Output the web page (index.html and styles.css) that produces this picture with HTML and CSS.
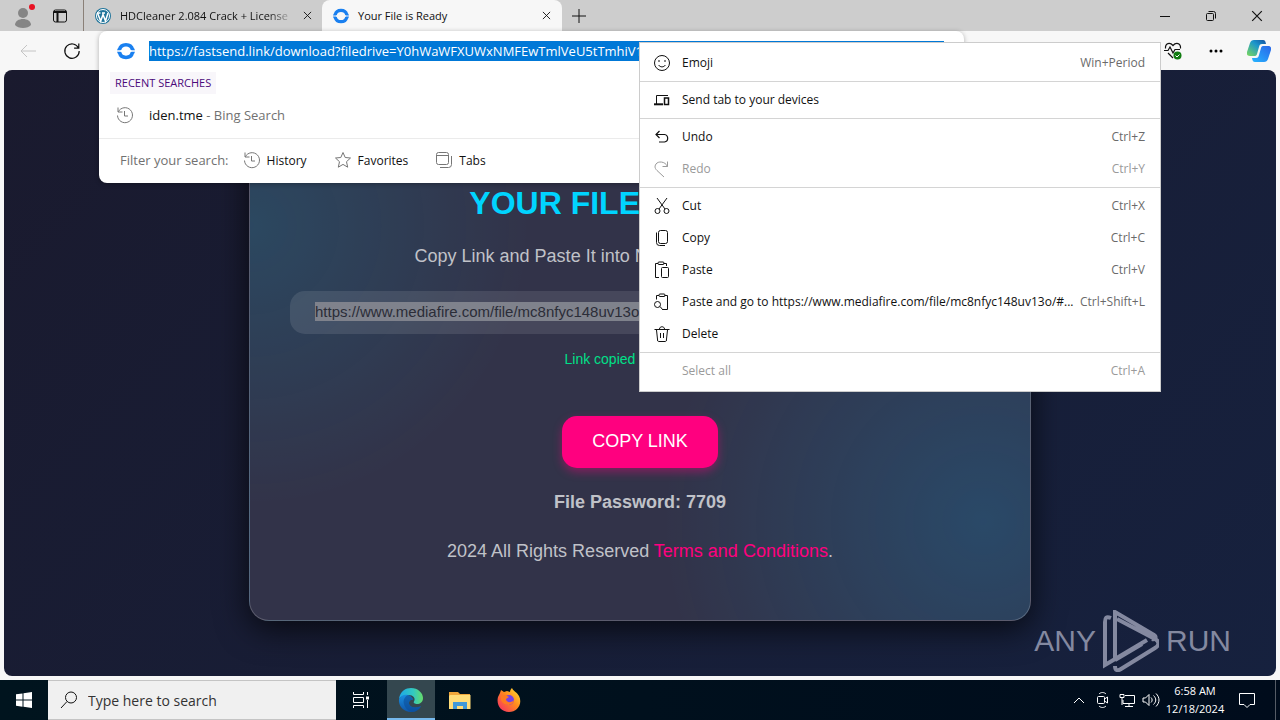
FILE: index.html
```html
<!DOCTYPE html>
<html lang="en">
<head>
  <meta charset="UTF-8" />
  <meta name="viewport" content="width=device-width, initial-scale=1.0" />
  <title>Your File is Ready</title>
  <link rel="stylesheet" href="styles.css">
</head>
<body>
  <svg width="0" height="0" class="defs">
    <defs>
      <symbol id="close" viewBox="0 0 10 10"><path d="M1 1l8 8M9 1l-8 8" /></symbol>
      <symbol id="history" viewBox="0 0 18 18"><path d="M2 1.500v4.500h4.500M2.300 5.800A7.500 7.500 0 1 1 1.500 9.500M8.500 5v5h3.500" /></symbol>
      <symbol id="ring" viewBox="0 0 18 18">
        <path d="M2.500 7.500C4 1 14 1 15.500 7.500M2.500 10.500C4 17 14 17 15.500 10.500" fill="none" stroke="#1a80f0" stroke-width="3.500" />
        <path d="M.8 6.500l4 0L3.500 8.300H0zM17.200 6.500h-4l1.300 1.800H18zM.8 11.500h4L3.500 9.700H0zM17.200 11.500h-4l1.300-1.800H18z" fill="#1a80f0" />
      </symbol>
    </defs>
  </svg>

  <header class="tabstrip">
    <button class="profile" aria-label="Profile">
      <svg width="22" height="26" viewBox="0 0 22 26"><circle cx="10" cy="10" r="5" fill="#858585" /><path d="M2 22c0-8 16-8 16 0-3 4-13 4-16 0z" fill="#858585" /><circle cx="19" cy="4" r="3" fill="#e81123" /></svg>
    </button>
    <button class="workspace" aria-label="Tab actions">
      <svg class="line" width="16" height="16" viewBox="0 0 16 16"><rect x="1.500" y="2" width="13" height="12" rx="2" /><path d="M2 4h12M5.500 5v9" stroke-width="2" /></svg>
    </button>
    <div class="tab">
      <svg width="16" height="16" viewBox="0 0 16 16"><circle cx="8" cy="8" r="8" fill="#21759b" /><circle cx="8" cy="8" r="6.500" fill="none" stroke="#fff" /><path d="M2.500 5l3.200 8L8 6.500l2.500 6.500L13 5M2 5h3.500M7 5h3" fill="none" stroke="#fff" stroke-width="1.500" /></svg>
      <span class="title faded">HDCleaner 2.084 Crack + License</span>
      <button aria-label="Close tab"><svg class="line" width="9" height="9"><use href="#close" /></svg></button>
    </div>
    <div class="tab active">
      <svg width="16" height="16"><use href="#ring" /></svg>
      <span class="title">Your File is Ready</span>
      <button aria-label="Close tab"><svg class="line" width="9" height="9"><use href="#close" /></svg></button>
    </div>
    <button class="new-tab" aria-label="New tab"><svg class="line" width="14" height="14" viewBox="0 0 14 14"><path d="M7 0v14M0 7h14" /></svg></button>
    <div class="window-buttons">
      <button aria-label="Minimize"><svg class="line" width="12" height="12" viewBox="0 0 12 12"><path d="M1 6.500h10" /></svg></button>
      <button aria-label="Restore"><svg class="line" width="12" height="12" viewBox="0 0 12 12"><rect x="1.500" y="3.500" width="7" height="7" rx="1" /><path d="M3.500 1.500h5a2 2 0 0 1 2 2v5" /></svg></button>
      <button aria-label="Close"><svg class="line" width="12" height="12"><use href="#close" /></svg></button>
    </div>
  </header>

  <div class="toolbar">
    <div class="nav">
      <button disabled aria-label="Back"><svg class="line" width="16" height="14" viewBox="0 0 16 14"><path d="M7 1L1 7l6 6M1 7h15" /></svg></button>
      <button aria-label="Refresh"><svg class="line" width="18" height="18" viewBox="0 0 18 18"><path d="M15.500 6A7.200 7.200 0 1 0 16.200 9M15.800 1.500v4.700h-4.700" stroke-width="1.200" /></svg></button>
    </div>
    <div class="address">
      <div class="popup">
        <label class="url">
          <svg width="18" height="18"><use href="#ring" /></svg>
          <input type="text" aria-label="Address" value="https://fastsend.link/download?filedrive=Y0hWaWFXUWxNMFEwTmlVeU5tTmhiV1FsTTBReE5pVXlObVJs" />
        </label>
        <h2>RECENT SEARCHES</h2>
        <a class="result" href="#">
          <svg class="line" width="18" height="18"><use href="#history" /></svg>
          <span>iden.tme <small>- Bing Search</small></span>
        </a>
        <div class="filters">
          <span>Filter your search:</span>
          <button><svg class="line" width="18" height="18"><use href="#history" /></svg>History</button>
          <button><svg class="line" width="18" height="18" viewBox="0 0 18 18"><path d="M9 1.500l2.200 5 5.300.5-4 3.700 1.200 5.500L9 13.400l-4.700 2.800 1.200-5.500-4-3.700 5.300-.5z" /></svg>Favorites</button>
          <button><svg class="line" width="18" height="18" viewBox="0 0 18 18"><rect x="1.500" y="1.500" width="12" height="12" rx="2" /><path d="M1.500 4.500h12M16.500 5v8.500a3 3 0 0 1-3 3H5" /></svg>Tabs</button>
        </div>
      </div>
    </div>
    <div class="tools">
      <button aria-label="Browser essentials">
        <svg class="line" width="18" height="18" viewBox="0 0 18 18"><path d="M1.500 6.500C1 1 6 0 9 3.500 12 0 17 1 16.500 6.500M0 8.500h4l2-3.500 3 6 2-3.500h5M4 11l5 5" stroke-width="1.200" /><circle cx="13.500" cy="13.500" r="4" fill="#107c10" stroke="none" /><path d="M11.500 13.500l1.500 1.500 2.500-2.500" stroke="#fff" /></svg>
      </button>
      <button aria-label="Settings and more"><svg width="14" height="4" viewBox="0 0 14 4"><circle cx="2" cy="2" r="1.500" /><circle cx="7" cy="2" r="1.500" /><circle cx="12" cy="2" r="1.500" /></svg></button>
      <button aria-label="Copilot">
        <svg width="24" height="24" viewBox="0 0 24 24">
          <defs>
            <linearGradient id="cp1" x1="1" y1="0" x2="0" y2="1"><stop offset="0" stop-color="#1450a0" /><stop offset=".4" stop-color="#1c96cc" /><stop offset="1" stop-color="#7bd95a" /></linearGradient>
            <linearGradient id="cp2" x1="1" y1="0" x2="0" y2="1"><stop offset="0" stop-color="#2a66e8" /><stop offset="1" stop-color="#27b5ff" /></linearGradient>
          </defs>
          <path d="M7 1h9c2 0 2.500 1.500 3 4h-4c-2 0-2.500 1-3 3l-2 7c-.5 1.500-1 2-3 2H3c-3 0-3.500-2-3-4L3 4c.7-2 2-3 4-3z" fill="url(#cp1)" />
          <path d="M17 23H8c-2 0-2.500-1.500-3-4h4c2 0 2.500-1 3-3l2-7c.5-1.500 1-2 3-2h4c3 0 3.500 2 3 4l-3 9c-.7 2-2 3-4 3z" fill="url(#cp2)" />
        </svg>
      </button>
    </div>
  </div>

  <main class="page">
    <section class="card">
      <h1>YOUR FILE IS READY!</h1>
      <p class="hint">Copy Link and Paste It into New Tab to Download It Now</p>
      <input class="link" type="text" readonly aria-label="Download link" value="https://www.mediafire.com/file/mc8nfyc148uv13o/#File" />
      <p class="copied">Link copied to clipboard!</p>
      <button class="copy">COPY LINK</button>
      <p class="password">File Password: 7709</p>
      <p class="footer">2024 All Rights Reserved <a href="#">Terms and Conditions</a>.</p>
    </section>
    <div class="watermark">
      <span>ANY</span>
      <svg width="56" height="62" viewBox="0 0 56 62"><path d="M8 8C3 6 2 8 2 12v43l42-25M12 56c0 5 3 5 6 3l34-21c5-3 4-7 0-9L14 9M12 50V2l39 23c3 2 1 5-2 4M12 50l27-16" /></svg>
      <span>RUN</span>
    </div>
  </main>

  <footer class="taskbar">
    <button class="start" aria-label="Start"><svg width="16" height="16" viewBox="0 0 16 16" fill="#fff"><path d="M0 2.300L6.500 1.400v6.200H0zM7.500 1.200L16 0v7.600H7.500zM0 8.500h6.500v6.200L0 13.800zM7.500 8.500H16V16l-8.500-1.200z" /></svg></button>
    <label class="search">
      <svg class="line" width="18" height="18" viewBox="0 0 18 18"><circle cx="11" cy="6.500" r="5.500" /><path d="M7 10.500L1 17" /></svg>
      <input type="text" placeholder="Type here to search" />
    </label>
    <button aria-label="Task view"><svg class="line" width="18" height="18" viewBox="0 0 18 18"><path d="M1.500 1v2.500h10V1M1.500 17v-2.500h10V17M1.500 6.500h10v5h-10zM15.500 1v3M15.500 9v8" /><path d="M14 5.500h3v3h-3z" fill="#fff" stroke="none" /></svg></button>
    <button class="running" aria-label="Microsoft Edge">
      <svg width="26" height="26" viewBox="0 0 26 26">
        <defs>
          <linearGradient id="eg1" x1="0" y1="0" x2="1" y2="0"><stop offset="0" stop-color="#1ca8e8" /><stop offset=".6" stop-color="#33c9c0" /><stop offset="1" stop-color="#66dc6a" /></linearGradient>
          <linearGradient id="eg2" x1="0" y1="0" x2="0" y2="1"><stop offset="0" stop-color="#1a8ee0" /><stop offset="1" stop-color="#0f55a8" /></linearGradient>
        </defs>
        <path d="M1 12C2 4 8 1 13 1c7 0 12 5 12 10 0 4-3 6-6 6-2 0-4-1-3-2.500C18 11 15 8 11 8 7 8 3 9 1 12z" fill="url(#eg1)" />
        <path d="M1 12c2-4 6-5 9-4 3 1 5 3 5 5-2-1-4 1-4 3 0 4 6 6 12 3-2 4-6 6-10 6C6 25 0 19 1 12z" fill="url(#eg2)" />
        <path d="M10 8c-4 2-5 6-4 9 1 4 4 7 8 8 4 0 7-2 9-6-6 3-12 1-12-3 0-2 2-4 4-3 0-2-2-4-5-5z" fill="#0c4c98" opacity=".6" />
      </svg>
    </button>
    <button aria-label="File Explorer"><svg width="24" height="20" viewBox="0 0 24 20"><path d="M1 2h9l2 2h10v15H1z" fill="#f0a63a" /><path d="M2 5h20.500v14H1V6z" fill="#ffdc78" /><path d="M5 19v-7h14v7h-4v-3h-6v3z" fill="#3f98d8" /></svg></button>
    <button aria-label="Firefox">
      <svg width="24" height="24" viewBox="0 0 24 24">
        <defs><linearGradient id="fx" x1="1" y1="0" x2="0" y2="1"><stop offset="0" stop-color="#ffe637" /><stop offset=".45" stop-color="#ff8a1e" /><stop offset="1" stop-color="#f5246d" /></linearGradient></defs>
        <path d="M3 5l1-3 3 2 3-1 3 1c0-2 1-3 2-4 1 3 5 4 7 8 4 8-2 16-10 16S-1 17 1 9z" fill="url(#fx)" />
        <circle cx="12" cy="12" r="5" fill="#7542e5" /><path d="M4 8c3-2 5-1 8 1l-3 2c0 4 6 4 8 1 0 6-10 7-13 0z" fill="#ff7a22" />
      </svg>
    </button>
    <div class="tray">
      <button aria-label="Show hidden icons"><svg class="line" width="12" height="8" viewBox="0 0 12 8"><path d="M1 7l5-5 5 5" /></svg></button>
      <button aria-label="Meet now"><svg class="line" width="14" height="18" viewBox="0 0 14 18"><rect x="1.500" y="5.500" width="7" height="7" rx="1" /><path d="M8.500 8l3-2v6l-3-2M3 3c2-2 5-2 7 0M3 15c2 2 5 2 7 0" /></svg></button>
      <button aria-label="Network"><svg class="line" width="17" height="16" viewBox="0 0 17 16"><path d="M6 3.500h9.500v8H4V8M1 2.500h4v3H1zM3 5v8M10 12v2.500M6 14.500h8" /></svg></button>
      <button aria-label="Volume"><svg class="line" width="18" height="16" viewBox="0 0 18 16"><path d="M1 6h2.500L7 2.500v11L3.500 10H1zM9 5.500c1.500 1.500 1.500 3.500 0 5M11.500 3.500c3 3 3 6 0 9M14 1.500c4 4 4 9 0 13" /></svg></button>
      <time>6:58 AM<br>12/18/2024</time>
      <button class="notices" aria-label="Notifications"><svg class="line" width="18" height="18" viewBox="0 0 18 18"><path d="M1.500 2.500h15v11H12l-3 3-3-3H1.500z" /></svg></button>
    </div>
  </footer>

  <div class="menu">
    <button><svg class="line" width="18" height="18" viewBox="0 0 18 18"><circle cx="9" cy="9" r="7.500" /><path d="M5.500 11c2 2.500 5 2.500 7 0M6 6v2M12 6v2" /></svg><span>Emoji</span><kbd>Win+Period</kbd></button>
    <hr>
    <button><svg class="line" width="18" height="18" viewBox="0 0 18 18"><path d="M3.500 13V4.500H15" /><path d="M1 13.300h9" stroke-width="2" /><rect x="11.500" y="7" width="4" height="6.500" stroke-width="1.500" /></svg><span>Send tab to your devices</span></button>
    <hr>
    <button><svg class="line" width="18" height="18" viewBox="0 0 18 18"><path d="M6.500 3L3 6.500 6.500 10M3 6.500h8.500a3.800 3.800 0 0 1 0 7.500H6" stroke-width="1.200" /></svg><span>Undo</span><kbd>Ctrl+Z</kbd></button>
    <button disabled><svg class="line" width="18" height="18" viewBox="0 0 18 18"><path d="M14.500 1.500v5h-5M14.500 6.500C12 1 5 1 3 4c-2 3-.5 5 1 6.500l7 6.500" /></svg><span>Redo</span><kbd>Ctrl+Y</kbd></button>
    <hr>
    <button><svg class="line" width="18" height="18" viewBox="0 0 18 18"><circle cx="4.500" cy="14" r="2.500" /><circle cx="13.500" cy="14" r="2.500" /><path d="M4 1l8 11M14 1L6 12" /></svg><span>Cut</span><kbd>Ctrl+X</kbd></button>
    <button><svg class="line" width="18" height="18" viewBox="0 0 18 18"><rect x="5.500" y="1.500" width="9" height="13" rx="2" /><path d="M3.500 3.500v10a3 3 0 0 0 3 3H12" /></svg><span>Copy</span><kbd>Ctrl+C</kbd></button>
    <button><svg class="line" width="18" height="18" viewBox="0 0 18 18"><rect x="8.500" y="6.500" width="7" height="10" rx="1" /><path d="M6 16.500H2.500v-14H5M10.500 2.500h3V5" /><rect x="5" y="1" width="6" height="2.500" rx="1" /></svg><span>Paste</span><kbd>Ctrl+V</kbd></button>
    <button><svg class="line" width="18" height="18" viewBox="0 0 18 18"><path d="M3.500 6.500v-4H6M11.500 2.500h3v14H10M7 13.500l3 3.500" /><rect x="6" y="1" width="6" height="2.500" rx="1" /><circle cx="4.500" cy="11.500" r="3" /></svg><span>Paste and go to https://www.mediafire.com/file/mc8nfyc148uv13o/#...</span><kbd>Ctrl+Shift+L</kbd></button>
    <button><svg class="line" width="18" height="18" viewBox="0 0 18 18"><path d="M1.500 4.500h15M6.500 4c0-3 5-3 5 0M3.500 5l1.200 11a1 1 0 0 0 1 .5h6.600a1 1 0 0 0 1-.5L14.500 5M7.500 8v5M10.500 8v5" /></svg><span>Delete</span></button>
    <hr>
    <button class="plain" disabled><span>Select all</span><kbd>Ctrl+A</kbd></button>
  </div>
</body>
</html>
```
FILE: styles.css
```css
* {
  box-sizing: border-box;
}
body {
  margin: 0;
  min-height: 100vh;
  display: flex;
  flex-direction: column;
  background: #f7f7f7;
  font-family: "Open Sans", "Noto Sans", sans-serif;
  font-size: 12px;
  color: #111;
}
button, input {
  font: inherit;
  color: inherit;
  border: none;
  background: none;
  padding: 0;
}
button {
  display: flex;
  align-items: center;
  justify-content: center;
}
svg {
  flex: none;
}
.defs {
  position: absolute;
}
.line {
  fill: none;
  stroke: currentColor;
  stroke-width: 1;
}

/* tab strip */
.tabstrip {
  display: flex;
  height: 31px;
  background: #cdcdcd;
}
.profile {
  width: 48px;
}
.workspace {
  width: 24px;
}
.tab {
  display: flex;
  align-items: center;
  gap: 9px;
  width: 240px;
  padding: 0 11px;
  font-size: 11px;
}
.tab:not(.active) {
  width: 239px;
  margin-left: 11px;
  padding-right: 10px;
  border-left: 1px solid #8a8078;
}
.tab.active {
  background: #f7f7f7;
  border-radius: 8px 8px 0 0;
}
.tab .title {
  flex: 1;
  white-space: nowrap;
}
.tab .faded {
  -webkit-mask-image: linear-gradient(90deg, #000 85%, transparent);
  mask-image: linear-gradient(90deg, #000 85%, transparent);
}
.new-tab {
  width: 34px;
}
.window-buttons {
  display: flex;
  margin-left: auto;
}
.window-buttons button {
  width: 46px;
}

/* toolbar */
.toolbar {
  display: flex;
  height: 39px;
}
.nav {
  display: flex;
  padding-left: 6px;
  width: 99px;
}
.nav button {
  width: 44px;
}
.nav button:disabled {
  color: #c4c4c4;
}
.address {
  flex: 1;
  position: relative;
}
.tools {
  display: flex;
  justify-content: flex-end;
  width: 316px;
}
.tools button {
  width: 43px;
}
.popup {
  position: absolute;
  z-index: 2;
  top: 0;
  left: 0;
  right: 0;
  background: #fff;
  border-radius: 8px;
  box-shadow: 0 1px 5px rgba(0, 0, 0, 0.3);
}
.url {
  display: flex;
  align-items: center;
  gap: 14px;
  height: 40px;
  padding: 0 20px 0 18px;
}
.url input {
  flex: 1;
  height: 20px;
  font-size: 13px;
  color: #fff;
  background: #0078d7;
}
.popup h2 {
  display: inline-block;
  margin: 1px 0 0 11px;
  padding: 0 5px;
  font-size: 11px;
  line-height: 22px;
  font-weight: 400;
  color: #4b0a7a;
  background: #f8f6fa;
}
.result {
  display: flex;
  align-items: center;
  gap: 15px;
  height: 44px;
  padding: 0 17px 2px;
  font-size: 13px;
  color: #111;
  text-decoration: none;
}
.result small {
  font-size: 13px;
  color: #717171;
}
.result svg, .filters svg {
  color: #767676;
}
.filters {
  display: flex;
  align-items: center;
  height: 45px;
  padding: 0 21px 2px;
  border-top: 1px solid #ebebeb;
}
.filters span {
  font-size: 13px;
  color: #717171;
}
.filters button {
  gap: 6px;
  margin-left: 27px;
}
.filters span + button {
  margin-left: 14px;
}

/* download page */
.page {
  flex: 1;
  position: relative;
  display: flex;
  align-items: center;
  justify-content: center;
  margin: 0 4px 4px;
  border-radius: 8px;
  overflow: hidden;
  background: linear-gradient(135deg, #1a1a2e, #16213e);
  font-family: "Liberation Sans", Arial, sans-serif;
}
.card {
  width: 782px;
  max-width: 100%;
  padding: 54px 40px 57px;
  border: 1px solid rgba(255, 255, 255, 0.2);
  border-radius: 20px;
  text-align: center;
  color: #c0c2c8;
  background:
    radial-gradient(circle at 0 20%, rgba(0, 212, 255, 0.13), transparent 280px),
    radial-gradient(circle at 94% 80%, rgba(0, 180, 255, 0.17), transparent 320px),
    #323349;
  box-shadow: 0 8px 32px rgba(0, 0, 0, 0.7);
}
.card h1 {
  margin: 0 0 19px;
  font-size: 32px;
  line-height: 44px;
  color: #00d4ff;
}
.card p {
  margin: 0;
  font-size: 18px;
  line-height: 24px;
}
.card .link {
  display: block;
  width: 100%;
  height: 43px;
  margin: 23px 0 13px;
  padding: 11px 25px 13px;
  border-radius: 15px;
  font-size: 15px;
  color: #2b2d38;
  background: linear-gradient(#7f828c, #7f828c) content-box, rgba(255, 255, 255, 0.1);
}
.card .copied {
  font-size: 14px;
  color: #00e088;
}
.copy {
  height: 52px;
  margin: 45px auto 22px;
  padding: 0 30px;
  border-radius: 15px;
  font-size: 18px;
  color: #fff;
  background: #ff007f;
  box-shadow: 0 4px 10px rgba(255, 0, 127, 0.4);
}
.card .password {
  margin-bottom: 25px;
  font-weight: bold;
}
.footer a {
  color: #ff007f;
  text-decoration: none;
}
.watermark {
  position: absolute;
  right: 45px;
  bottom: 4px;
  display: flex;
  align-items: center;
  gap: 7px;
  font-size: 30px;
  color: #8489a0;
}
.watermark svg {
  fill: none;
  stroke: currentColor;
  stroke-width: 4;
}

/* taskbar */
.taskbar {
  display: flex;
  height: 40px;
  color: #fff;
  background: linear-gradient(90deg, #00141e, #000c1c);
}
.taskbar > button {
  width: 49px;
}
.taskbar > .start {
  width: 48px;
}
.search {
  display: flex;
  align-items: center;
  gap: 10px;
  width: 288px;
  padding-left: 12px;
  color: #111;
  background: #f0f0f0;
  border: 1px solid #c4c4c4;
  border-width: 1px 0;
}
.search input {
  flex: 1;
  font-size: 14px;
}
.search input::placeholder {
  color: #333;
}
.taskbar > .running {
  width: 48px;
  margin-left: 2px;
  background: #34474f;
  box-shadow: inset 0 -2px #76b9ed;
}
.tray {
  display: flex;
  align-items: center;
  margin-left: auto;
  margin-right: 4px;
  padding-right: 8px;
  border-right: 1px solid #555c66;
}
.tray button {
  width: 24px;
}
.tray time {
  width: 64px;
  font-size: 11px;
  line-height: 18px;
  text-align: center;
}
.tray .notices {
  width: 40px;
}

/* context menu */
.menu {
  position: absolute;
  z-index: 3;
  top: 42px;
  left: 639px;
  width: 522px;
  padding: 4px 0;
  background: #fff;
  border: 1px solid #ccc;
}
.menu button {
  width: 100%;
  height: 32px;
  padding: 0 15px 1px 13px;
}
.menu svg {
  margin-right: 11px;
}
.menu span {
  flex: 1;
  text-align: left;
  white-space: nowrap;
}
.menu .plain {
  padding-left: 42px;
}
.menu kbd {
  margin-left: 6px;
  font: inherit;
  color: #6a6a6a;
}
.menu button:disabled, .menu button:disabled kbd {
  color: #9a9a9a;
}
.menu hr {
  margin: 2px 0;
  border: none;
  border-top: 1px solid #d4d4d4;
}
```
